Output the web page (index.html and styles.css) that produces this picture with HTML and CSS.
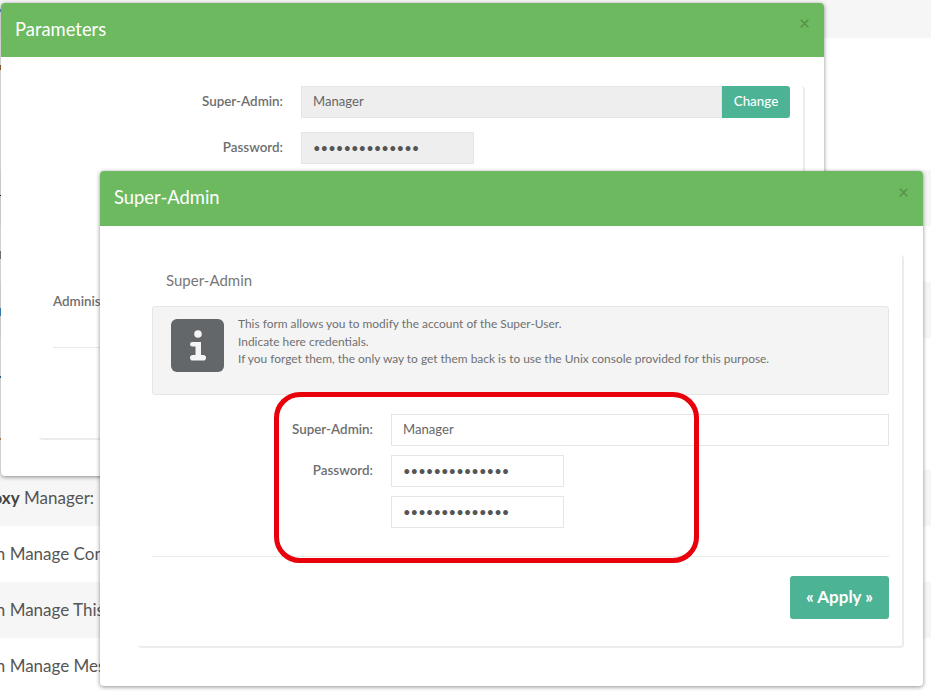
FILE: index.html
```html
<!DOCTYPE html>
<html lang="en">
<head>
<meta charset="utf-8">
<title>Super-Admin</title>
<link rel="stylesheet" href="styles.css">
</head>
<body>
<div class="page">
  <div class="row row-top alt"></div>
  <div class="row row-tall"></div>
  <div class="row alt"></div>
  <div class="row"></div>
  <div class="row alt"></div>
  <div class="row row-tall"></div>
  <div class="row alt"><span class="row-text"><b>Proxy</b> Manager:</span></div>
  <div class="row"><span class="row-text">Can Manage Content</span></div>
  <div class="row alt"><span class="row-text">Can Manage This</span></div>
  <div class="row"><span class="row-text">Can Manage Messages</span></div>
</div>
<div class="edge-marks"></div>

<section class="modal modal-params">
  <header class="modal-head">
    <h2 class="modal-title">Parameters</h2>
    <span class="modal-close">×</span>
  </header>
  <div class="panel panel-params">
    <div class="form-row">
      <label class="form-label">Super-Admin:</label>
      <div class="input-group">
        <div class="field field-ro field-grow">Manager</div>
        <div class="btn-change">Change</div>
      </div>
    </div>
    <div class="form-row">
      <label class="form-label">Password:</label>
      <div class="field field-ro field-pw">••••••••••••••</div>
    </div>
    <div class="admin-row">Administrators</div>
    <div class="admin-line"></div>
  </div>
</section>

<section class="modal modal-super">
  <header class="modal-head">
    <h2 class="modal-title">Super-Admin</h2>
    <span class="modal-close">×</span>
  </header>
  <div class="panel panel-super">
    <h3 class="panel-title">Super-Admin</h3>
    <div class="info-box">
      <div class="info-icon">
        <svg width="16" height="31" viewBox="0 0 16 31" aria-hidden="true">
          <circle cx="8" cy="4" r="3.8" fill="#f4f4f4"/>
          <path d="M2.3 12H11V25H13.2a2.8 2.8 0 0 1 0 5.6H2.8a2.8 2.8 0 0 1 0-5.6H5.5V16.6H2.3a2.3 2.3 0 0 1 0-4.6z" fill="#f4f4f4"/>
        </svg>
      </div>
      <p class="info-text">This form allows you to modify the account of the Super-User.<br>Indicate here credentials.<br>If you forget them, the only way to get them back is to use the Unix console provided for this purpose.</p>
    </div>
    <div class="form-row form-row-first">
      <label class="form-label form-label-super">Super-Admin:</label>
      <div class="field field-grow">Manager</div>
    </div>
    <div class="form-row form-row-tight">
      <label class="form-label form-label-super">Password:</label>
      <div class="field field-pw">••••••••••••••</div>
    </div>
    <div class="form-row form-row-tight">
      <span class="form-label form-label-super"></span>
      <div class="field field-pw">••••••••••••••</div>
    </div>
    <div class="form-actions">
      <div class="btn-apply">« Apply »</div>
    </div>
  </div>
</section>

<div class="callout"></div>
</body>
</html>
```
FILE: styles.css
```css
* { box-sizing: border-box; }
html, body { margin: 0; padding: 0; }
body {
  width: 931px;
  height: 694px;
  overflow: hidden;
  position: relative;
  background: #fff;
  font-family: Lato, "Open Sans", sans-serif;
  color: #666;
}
.page { display: flex; flex-direction: column; }
.row { height: 56px; display: flex; align-items: center; flex: none; overflow: hidden; }
.row-top { height: 38px; }
.row-tall { height: 132px; }
.alt { background: #f6f6f6; }
.row-text { font-size: 17px; color: #555; margin: -2px 0 0 -24px; white-space: nowrap; }
.row-text b { color: #444; }

.edge-marks {
  position: absolute;
  left: 0;
  top: 0;
  width: 1px;
  height: 460px;
  background:
    linear-gradient(#5b9bd5, #5b9bd5) 0 9px / 1px 3px no-repeat,
    linear-gradient(#9a6a3a, #9a6a3a) 0 65px / 1px 5px no-repeat,
    linear-gradient(#222, #222) 0 195px / 1px 1px no-repeat,
    linear-gradient(#888, #888) 0 251px / 1px 8px no-repeat,
    linear-gradient(#4a90d0, #4a90d0) 0 308px / 1px 8px no-repeat,
    linear-gradient(#3a6ab0, #3a6ab0) 0 376px / 1px 2px no-repeat,
    linear-gradient(#c98a4a, #c98a4a) 0 438px / 1px 2px no-repeat;
}

.modal {
  position: absolute;
  background: #fff;
  border-radius: 4px;
  box-shadow: 0 1px 4px rgba(0, 0, 0, .45);
}
.modal-params { left: 1px; top: 3px; width: 823px; height: 473px; }
.modal-super { left: 100px; top: 171px; width: 823px; height: 515px; }
.modal-head {
  height: 54px;
  background: #6db95f;
  border-radius: 4px 4px 0 0;
  display: flex;
  align-items: center;
  justify-content: space-between;
  padding: 0 14px;
}
.modal-super .modal-head { height: 55px; }
.modal-title { margin: -2px 0 0; font-size: 18.4px; font-weight: 400; color: #fff; }
.modal-super .modal-title { margin-top: -3px; }
.modal-close { font-size: 19px; line-height: 1; color: #55914a; margin-top: -16px; }
.modal-super .modal-close { margin-top: -14px; }

.panel {
  border-right: 2px solid #ececec;
  border-bottom: 2px solid #ececec;
  border-radius: 4px;
}
.panel-params {
  margin: 29px 19px 0 38px;
  height: 354px;
  padding-right: 13px;
}
.panel-super {
  margin: 29px 19px 0 38px;
  height: 393px;
  padding: 0 13px 0 14px;
}
.form-row { display: flex; align-items: flex-start; margin-bottom: 14px; }
.form-label {
  flex: none;
  width: 244px;
  margin-right: 18px;
  padding-top: 7px;
  text-align: right;
  font-size: 13.4px;
  font-weight: 600;
  line-height: 16px;
  color: #6e6e6e;
}
.form-label-super { width: 221px; }
.input-group { display: flex; flex: 1; }
.field {
  height: 32px;
  padding: 0 11px;
  border: 1px solid #e5e5e5;
  font-size: 13.1px;
  line-height: 28px;
  color: #666;
}
.field-ro { background: #eee; }
.field-grow { flex: 1; }
.field-pw { width: 173px; line-height: 30px; color: #555; }
.btn-change {
  flex: none;
  width: 68px;
  height: 32px;
  background: #4cb394;
  color: #fff;
  border-radius: 0 3px 3px 0;
  font-size: 13.4px;
  font-weight: 500;
  line-height: 30px;
  text-align: center;
}
.admin-row {
  margin: 129px 0 0 14px;
  width: 60px;
  font-size: 13.4px;
  font-weight: 600;
  line-height: 16px;
  white-space: nowrap;
  color: #6e6e6e;
}
.admin-line { margin: 38px 0 0 14px; border-top: 1px solid #e9e9e9; }

.panel-title {
  margin: 0;
  padding: 16px 0 0 14px;
  height: 51px;
  font-size: 15px;
  font-weight: 400;
  line-height: 18px;
  color: #777;
}
.info-box {
  display: flex;
  height: 89px;
  padding: 12px 18px;
  background: #f4f4f4;
  border: 1px solid #e6e6e6;
  border-radius: 3px;
}
.info-icon {
  flex: none;
  width: 53px;
  height: 53px;
  margin-right: 14px;
  border-radius: 6px;
  background: #63676a;
  display: flex;
  align-items: center;
  justify-content: center;
}
.info-text { margin: -4px 0 0; font-size: 11.93px; line-height: 17.6px; color: #707070; }
.form-row-first { margin: 19px 0 9px; }
.form-row-tight { margin-bottom: 9px; }
.form-actions {
  margin-top: 28px;
  padding-top: 19px;
  border-top: 1px solid #e9e9e9;
  display: flex;
  justify-content: flex-end;
}
.btn-apply {
  width: 99px;
  height: 43px;
  background: #4cb394;
  color: #fff;
  border-radius: 3px;
  font-size: 17px;
  font-weight: 700;
  line-height: 41px;
  text-align: center;
}
.callout {
  position: absolute;
  left: 274px;
  top: 392px;
  width: 425px;
  height: 171px;
  border: 5px solid #e8000a;
  border-radius: 26px;
}
```
